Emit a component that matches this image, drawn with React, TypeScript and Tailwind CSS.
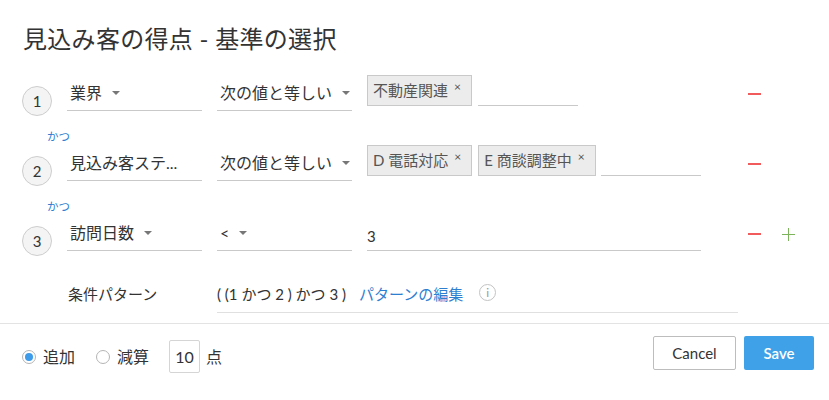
import React from "react";

const FONT = {
  fontFamily:
    '"Lato", "Noto Sans CJK JP", "Noto Sans", sans-serif',
};

function Caret() {
  return (
    <span className="ml-[10px] inline-block h-0 w-0 border-l-[4px] border-r-[4px] border-t-[4px] border-l-transparent border-r-transparent border-t-[#777]" />
  );
}

function Circle({ n }: { n: number }) {
  return (
    <div className="mt-[11px] flex h-[30px] w-[30px] shrink-0 items-center justify-center rounded-full border border-[#cdcdcd] bg-[#f4f4f4] text-[15px] text-[#333]">
      {n}
    </div>
  );
}

function Field({ children }: { children: React.ReactNode }) {
  return (
    <div className="flex h-[36px] w-[135px] shrink-0 items-center border-b border-[#c9c9c9] pl-[3px] text-[16px] text-[#333]">
      {children}
    </div>
  );
}

function Tag({ label }: { label: string }) {
  return (
    <div className="mr-[6px] flex h-[31px] shrink-0 items-center border border-[#c9c9c9] bg-[#ececec] pl-[5px] pr-[10px] text-[15px] text-[#555]">
      <span>{label}</span>
      <span className="ml-[6px] -mt-[8px] text-[12px] text-[#555]">×</span>
    </div>
  );
}

function Minus() {
  return (
    <div className="ml-[47px] mt-[18px] h-[1.5px] w-[13px] shrink-0 bg-[#f25b5b]" />
  );
}

function Plus() {
  return (
    <div className="relative ml-[21px] mt-[13px] h-[13px] w-[13px] shrink-0">
      <div className="absolute left-0 top-[6px] h-[1.3px] w-[13px] bg-[#7cb45c]" />
      <div className="absolute left-[6px] top-0 h-[13px] w-[1.3px] bg-[#7cb45c]" />
    </div>
  );
}

function Katsu() {
  return (
    <div className="h-[34px] pl-[25px] pt-[19px] text-[11.5px] leading-[13px] text-[#2f7fd1]">
      かつ
    </div>
  );
}

export default function App() {
  return (
    <div className="h-[400px] w-[829px] bg-white" style={FONT}>
      <div className="pl-[23px] pt-[24px] text-[24px] leading-[30px] tracking-[0.3px] text-[#333]">
        見込み客の得点 - 基準の選択
      </div>

      <div className="mt-[21px] flex flex-col pl-[22px]">
        {/* Row 1 */}
        <div className="flex h-[36px] items-start">
          <Circle n={1} />
          <div className="ml-[15px] flex gap-[15px]">
            <Field>
              業界
              <Caret />
            </Field>
            <Field>
              次の値と等しい
              <Caret />
            </Field>
          </div>
          <div className="ml-[15px] flex w-[334px] items-start">
            <Tag label="不動産関連" />
            <div className="h-[31px] w-[100px] border-b border-[#c9c9c9]" />
          </div>
          <Minus />
        </div>
        <Katsu />
        {/* Row 2 */}
        <div className="flex h-[36px] items-start">
          <Circle n={2} />
          <div className="ml-[15px] flex gap-[15px]">
            <Field>見込み客ステ...</Field>
            <Field>
              次の値と等しい
              <Caret />
            </Field>
          </div>
          <div className="ml-[15px] flex w-[334px] items-start">
            <Tag label="D 電話対応" />
            <Tag label="E 商談調整中" />
            <div className="-ml-[1px] h-[31px] w-[100px] border-b border-[#c9c9c9]" />
          </div>
          <Minus />
        </div>
        <Katsu />
        {/* Row 3 */}
        <div className="flex h-[36px] items-start">
          <Circle n={3} />
          <div className="ml-[15px] flex gap-[15px]">
            <Field>
              訪問日数
              <Caret />
            </Field>
            <Field>
              &lt;
              <Caret />
            </Field>
          </div>
          <div className="ml-[15px] flex h-[36px] w-[334px] items-center border-b border-[#c9c9c9] pt-[8px] text-[15px] text-[#333]">
            3
          </div>
          <Minus />
          <Plus />
        </div>

        {/* Pattern row */}
        <div className="mt-[27px] flex h-[35px] items-start">
          <div className="w-[195px] pl-[46px] pt-[5px] text-[15px] text-[#333]">
            条件パターン
          </div>
          <div className="flex h-[35px] w-[521px] items-start border-b border-[#e0e0e0] pt-[5px] text-[15px]">
            <span className="whitespace-pre text-[#333]">( (1 かつ 2 ) かつ 3 )</span>
            <span className="ml-[13px] text-[#2f7fd1]">パターンの編集</span>
            <span className="ml-[16px] mt-[1px] flex h-[17px] w-[17px] items-center justify-center rounded-full border border-[#c3c3c3] text-[12px] leading-none text-[#999]">
              i
            </span>
          </div>
        </div>
      </div>

      <div className="mt-[10px] h-px w-full bg-[#e3e3e3]" />

      <div className="flex items-start justify-between pl-[22px] pr-[15px]">
        <div className="mt-[16px] flex h-[33px] items-center text-[16px] text-[#333]">
          <span className="flex h-[14px] w-[14px] items-center justify-center rounded-full border border-[#b5b5b5]">
            <span className="h-[8px] w-[8px] rounded-full bg-[#3d9be9]" />
          </span>
          <span className="ml-[7px]">追加</span>
          <span className="ml-[21px] h-[14px] w-[14px] rounded-full border border-[#b5b5b5]" />
          <span className="ml-[7px]">減算</span>
          <span className="ml-[20px] flex h-[33px] w-[31px] items-center justify-center rounded-[2px] border border-[#d5d5d5] text-[16px]">
            10
          </span>
          <span className="ml-[6px]">点</span>
        </div>
        <div className="mt-[12px] flex items-center gap-[8px]">
          <button className="h-[34px] w-[83px] rounded-[2px] border border-[#bdbdbd] bg-white text-[15px] text-[#333]">
            Cancel
          </button>
          <button className="h-[34px] w-[70px] rounded-[2px] bg-[#3fa2e8] text-[15px] font-semibold text-white">
            Save
          </button>
        </div>
      </div>
    </div>
  );
}
